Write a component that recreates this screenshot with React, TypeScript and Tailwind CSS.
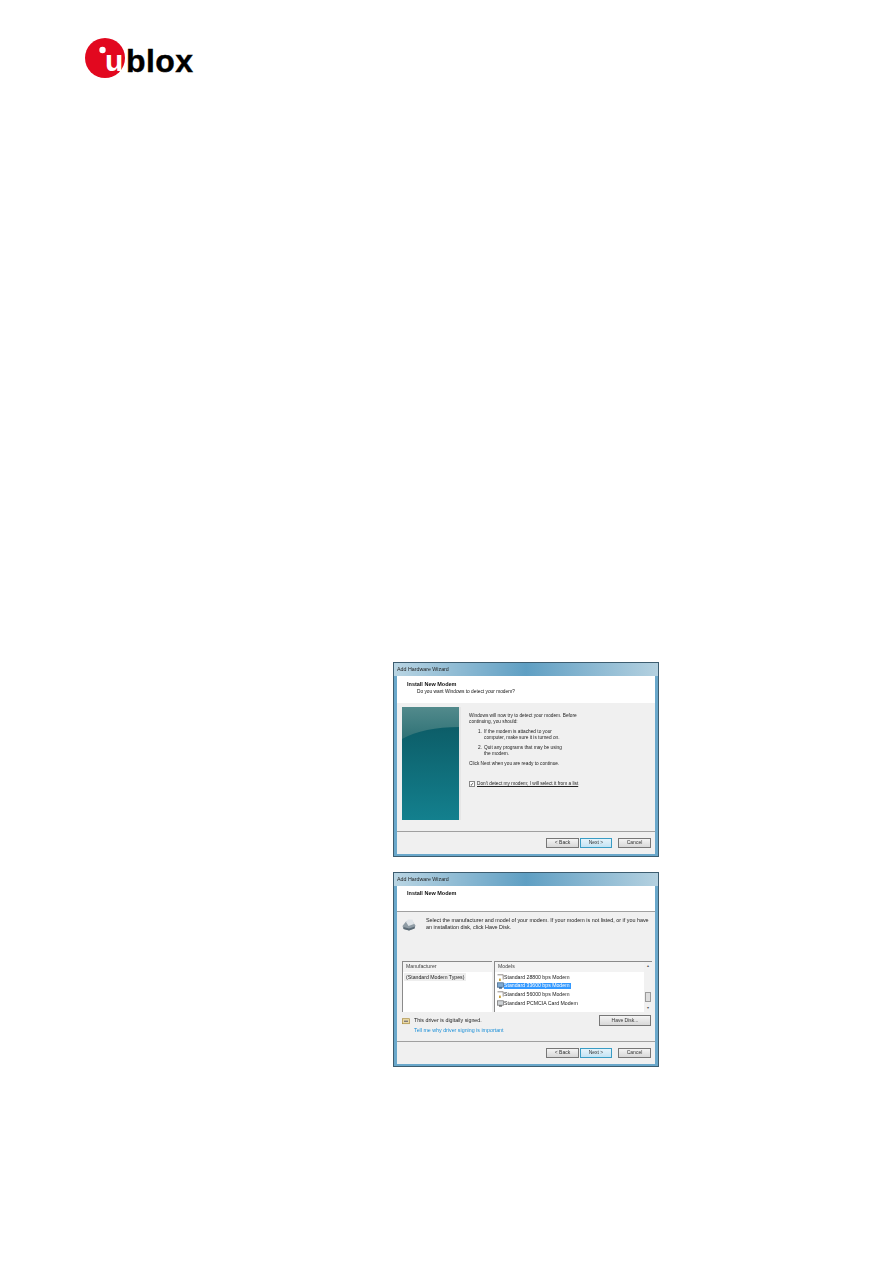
const F = { fontFamily: '"Liberation Sans", Arial, sans-serif' };

function Logo() {
  return (
    <svg width="112" height="42" viewBox="0 0 112 42" className="block">
      <circle cx="20" cy="20" r="20" fill="#e2081f" />
      <circle cx="17.5" cy="12" r="3.2" fill="#fff" />
      <text x="20" y="33" fontSize="30" fontWeight="700" fontFamily="Liberation Sans, sans-serif" fill="#fff">u</text>
      <text x="41" y="34" fontSize="32" fontWeight="700" fontFamily="Liberation Sans, sans-serif" fill="#000" stroke="#000" strokeWidth="0.4" textLength="67">blox</text>
    </svg>
  );
}

function WizardArt() {
  return (
    <svg width="57" height="113" viewBox="0 0 57 113" className="block shrink-0">
      <defs>
        <linearGradient id="wa" x1="0" y1="0" x2="0" y2="1">
          <stop offset="0" stopColor="#0b5660" />
          <stop offset="1" stopColor="#13808e" />
        </linearGradient>
        <linearGradient id="wb" x1="0" y1="0" x2="0" y2="1">
          <stop offset="0" stopColor="#528a8c" />
          <stop offset="1" stopColor="#2f7276" />
        </linearGradient>
      </defs>
      <rect width="57" height="113" fill="url(#wa)" />
      <path d="M0 32C14 24 34 20 57 20V0H0Z" fill="url(#wb)" />
    </svg>
  );
}

function Btn({ label, primary, className }: { label: string; primary?: boolean; className: string }) {
  return (
    <div
      className={`flex items-center justify-center border text-[5px] text-[#333] ${
        primary
          ? 'border-[#3a9cc4] bg-gradient-to-b from-[#e6f4fb] to-[#c4e3f3]'
          : 'border-[#777] bg-gradient-to-b from-[#f4f4f4] to-[#d8d8d8]'
      } ${className}`}
    >
      {label}
    </div>
  );
}

function Frame({ title, children }: { title: string; children: React.ReactNode }) {
  return (
    <div className="flex h-[195px] w-[266px] flex-col border border-[#3d5d70] bg-[#6aa8cb] px-[3px] pb-[2px]">
      <div className="-mx-[3px] flex h-[13px] shrink-0 items-center bg-gradient-to-r from-[#b9d5e3] via-[#5f9fc3] to-[#b4d1e0] pl-[3px] text-[5.3px] leading-none text-[#222] blur-[0.3px]">
        {title}
      </div>
      <div className="flex min-h-0 flex-1 flex-col bg-[#f0f0f0]">{children}</div>
    </div>
  );
}

function Footer({ back }: { back: string }) {
  return (
    <div className="mt-auto flex h-[23px] shrink-0 border-t border-[#a0a0a0] pt-[6px] pl-[149px] blur-[0.2px]">
      <Btn label={back} className="h-[10px] w-[33px]" />
      <Btn label="Next >" primary className="ml-[1px] h-[10px] w-[32px]" />
      <Btn label="Cancel" className="ml-[6px] h-[10px] w-[33px]" />
    </div>
  );
}

function FirstDialog() {
  return (
    <Frame title="Add Hardware Wizard">
      <div className="h-[27px] shrink-0 bg-white pt-[4px] pl-[10px] text-[5.5px] leading-[8px] text-[#111]">
        <div className="font-bold blur-[0.3px]">Install New Modem</div>
        <div className="pl-[10px] text-[4.8px] blur-[0.3px]">Do you want Windows to detect your modem?</div>
      </div>
      <div className="flex pt-[4px] pl-[5px]">
        <div className="bg-[#e6e6e6] pr-[2px]"><WizardArt /></div>
        <div className="pl-[8px] pt-[6px] text-[4.75px] leading-[6px] text-[#222] blur-[0.3px]">
          <div>Windows will now try to detect your modem. Before</div>
          <div>continuing, you should:</div>
          <div className="mt-[4px] flex pl-[9px]">
            <span className="w-[6px]">1.</span>
            <div>If the modem is attached to your<br />computer, make sure it is turned on.</div>
          </div>
          <div className="mt-[4px] flex pl-[9px]">
            <span className="w-[6px]">2.</span>
            <div>Quit any programs that may be using<br />the modem.</div>
          </div>
          <div className="mt-[4px]">Click Next when you are ready to continue.</div>
          <div className="mt-[14px] flex items-center">
            <div className="flex h-[6px] w-[6px] items-center justify-center border border-[#888] bg-white text-[5px] leading-none">✓</div>
            <span className="pl-[2px] underline">Don't detect my modem; I will select it from a list</span>
          </div>
        </div>
      </div>
      <Footer back="< Back" />
    </Frame>
  );
}

function ModemIcon({ kind }: { kind: 'line' | 'blue' | 'gray' }) {
  if (kind === 'line') {
    return (
      <svg width="7" height="7" viewBox="0 0 7 7" className="shrink-0">
        <path d="M0.5 0.8H6.2V5.5" fill="none" stroke="#77706a" strokeWidth="0.8" />
        <rect x="2" y="4.6" width="1.8" height="2.4" fill="#c9a23a" />
      </svg>
    );
  }
  const bg = kind === 'blue' ? '#7fa9cf' : '#cfd3d6';
  const edge = kind === 'blue' ? '#3d6288' : '#6d6d6d';
  return (
    <svg width="7" height="7" viewBox="0 0 7 7" className="shrink-0">
      <rect x="0.5" y="0.8" width="6" height="4.4" fill={bg} stroke={edge} strokeWidth="0.7" />
      <rect x="2" y="5.2" width="3" height="1.5" fill={edge} />
    </svg>
  );
}

function ModemRow({ label, selected, kind }: { label: string; selected?: boolean; kind: 'line' | 'blue' | 'gray' }) {
  return (
    <div className="flex h-[8.67px] items-center">
      <ModemIcon kind={kind} />
      <span className={selected ? 'bg-[#3399ff] pr-[2px] text-white' : ''}>{label}</span>
    </div>
  );
}

function SecondDialog() {
  return (
    <Frame title="Add Hardware Wizard">
      <div className="h-[26px] shrink-0 border-b border-[#a0a0a0] bg-white pt-[3px] pl-[10px] text-[5.5px] leading-[8px] font-bold text-[#111]">
        <div className="blur-[0.3px]">Install New Modem</div>
      </div>
      <div className="flex pt-[5px] pl-[5px]">
        <svg width="14" height="12" viewBox="0 0 14 12" className="mt-[2px] shrink-0">
          <path d="M0.5 7L4 2.5h6.5L13.5 6.5 12.5 9.5 7 11.5 1.5 10Z" fill="#8f9ca5" />
          <path d="M4 3L6 0.5h4.5L12 5 6.5 7Z" fill="#dfe4e8" />
          <path d="M1.5 8L7 9.6 13 7.5 12.5 9.5 7 11.5 1.5 10Z" fill="#5b6a75" />
        </svg>
        <div className="pl-[10px] text-[5.4px] leading-[7px] text-[#222] blur-[0.3px]">
          <div>Select the manufacturer and model of your modem. If your modem is not listed, or if you have</div>
          <div>an installation disk, click Have Disk.</div>
        </div>
      </div>
      <div className="mt-[30px] flex gap-[2px] pl-[5px] text-[5.2px] leading-none text-[#222]">
        <div className="h-[51px] w-[90px] border-t border-l border-[#8a8a8a] bg-white">
          <div className="flex h-[10px] items-center bg-[#f3f3f3] pl-[3px] text-[#444] blur-[0.3px]">Manufacturer</div>
          <div className="mt-[1px] ml-[1px] w-fit bg-[#eeeeee] px-[2px] py-[1.5px] blur-[0.3px]">(Standard Modem Types)</div>
        </div>
        <div className="flex h-[51px] w-[158px] border-t border-l border-[#8a8a8a] bg-white">
          <div className="flex-1">
            <div className="flex h-[10px] items-center bg-[#f3f3f3] pl-[3px] text-[#444] blur-[0.3px]">Models</div>
            <div className="mt-[1px] pl-[2px] blur-[0.25px]">
              <ModemRow label="Standard 28800 bps Modem" kind="line" />
              <ModemRow label="Standard 33600 bps Modem" selected kind="blue" />
              <ModemRow label="Standard 56000 bps Modem" kind="line" />
              <ModemRow label="Standard PCMCIA Card Modem" kind="gray" />
            </div>
          </div>
          <div className="flex w-[8px] flex-col items-center bg-[#f1f1f1] py-[2px] text-[4px] leading-[4px] text-[#555]">
            <span>▴</span>
            <div className="mt-[24px] h-[10px] w-[6px] border border-[#9a9a9a] bg-[#dedede]" />
            <span className="mt-auto">▾</span>
          </div>
        </div>
      </div>
      <div className="flex pt-[3px] pl-[5px] text-[5.3px] text-[#222]">
        <svg width="8" height="7" viewBox="0 0 8 7" className="mt-[3px] shrink-0">
          <rect x="0.5" y="0.7" width="7" height="5" fill="#e9d9a8" stroke="#a88a3a" strokeWidth="0.7" />
          <rect x="2" y="2.7" width="4" height="1" fill="#556" />
        </svg>
        <div className="pl-[4px] leading-[10px] blur-[0.3px]">
          <div>This driver is digitally signed.</div>
          <div className="text-[#1a8fd8]">Tell me why driver signing is important</div>
        </div>
        <Btn label="Have Disk..." className="mr-[4px] ml-auto h-[11px] w-[52px] blur-[0.2px]" />
      </div>
      <Footer back="< Back" />
    </Frame>
  );
}

export default function App() {
  return (
    <div className="h-[1263px] w-[892px] overflow-hidden bg-white" style={F}>
      <div className="pt-[38px] pl-[85px]"><Logo /></div>
      <div className="mt-[582px] ml-[393px] flex flex-col gap-[15px]">
        <FirstDialog />
        <SecondDialog />
      </div>
    </div>
  );
}
